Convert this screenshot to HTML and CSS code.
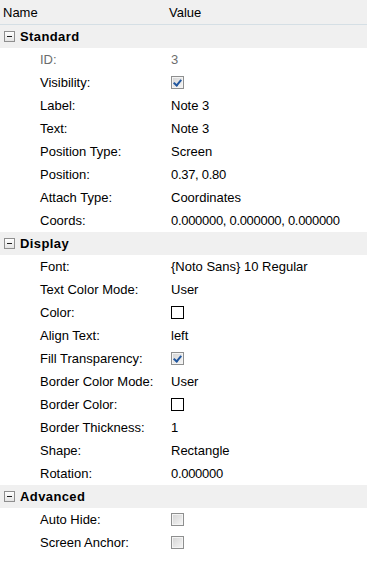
FILE: index.html
```html
<!DOCTYPE html>
<html>
<head>
    <title>Properties</title>
    <link rel="stylesheet" href="styles.css">
</head>
<body>
    <div class="grid">
        <div class="head">
            <div class="name-col">Name</div>
            <div class="value-col">Value</div>
        </div>

        <div class="section"><span class="toggle"></span>Standard</div>
        <div class="row disabled"><div class="label">ID:</div><div class="value">3</div></div>
        <div class="row"><div class="label">Visibility:</div><div class="value"><span class="check on"></span></div></div>
        <div class="row"><div class="label">Label:</div><div class="value">Note 3</div></div>
        <div class="row"><div class="label">Text:</div><div class="value">Note 3</div></div>
        <div class="row"><div class="label">Position Type:</div><div class="value">Screen</div></div>
        <div class="row"><div class="label">Position:</div><div class="value num">0.37, 0.80</div></div>
        <div class="row"><div class="label">Attach Type:</div><div class="value">Coordinates</div></div>
        <div class="row"><div class="label">Coords:</div><div class="value num">0.000000, 0.000000, 0.000000</div></div>

        <div class="section"><span class="toggle"></span>Display</div>
        <div class="row"><div class="label">Font:</div><div class="value">{Noto Sans} 10 Regular</div></div>
        <div class="row"><div class="label">Text Color Mode:</div><div class="value">User</div></div>
        <div class="row"><div class="label">Color:</div><div class="value"><span class="swatch"></span></div></div>
        <div class="row"><div class="label">Align Text:</div><div class="value">left</div></div>
        <div class="row"><div class="label">Fill Transparency:</div><div class="value"><span class="check on"></span></div></div>
        <div class="row"><div class="label">Border Color Mode:</div><div class="value">User</div></div>
        <div class="row"><div class="label">Border Color:</div><div class="value"><span class="swatch"></span></div></div>
        <div class="row"><div class="label">Border Thickness:</div><div class="value">1</div></div>
        <div class="row"><div class="label">Shape:</div><div class="value">Rectangle</div></div>
        <div class="row"><div class="label">Rotation:</div><div class="value num">0.000000</div></div>

        <div class="section"><span class="toggle"></span>Advanced</div>
        <div class="row"><div class="label">Auto Hide:</div><div class="value"><span class="check"></span></div></div>
        <div class="row"><div class="label">Screen Anchor:</div><div class="value"><span class="check"></span></div></div>
    </div>
</body>
</html>
```

FILE: styles.css
```css
body {
    margin: 0;
    background: #fff;
    font-family: "Liberation Sans", Arial, sans-serif;
    font-size: 13px;
    color: #000;
}
.grid {
    width: 367px;
}
.head {
    display: flex;
    height: 24px;
    align-items: center;
    background: #f0f0f0;
    border-bottom: 1px solid #d5dfe5;
}
.name-col {
    width: 166px;
    padding-left: 3px;
}
.section {
    display: flex;
    align-items: center;
    height: 23px;
    background: #f0f0f0;
    font-weight: bold;
    letter-spacing: 0.4px;
    padding-left: 4px;
}
.toggle {
    position: relative;
    width: 9px;
    height: 9px;
    margin-right: 5px;
    border: 1px solid #8f8f8f;
    background: linear-gradient(#ffffff, #e4e4e4);
}
.toggle::after {
    content: "";
    position: absolute;
    left: 2px;
    top: 4px;
    width: 5px;
    height: 1px;
    background: #1e1e1e;
}
.row {
    display: flex;
    align-items: center;
    height: 23px;
}
.label {
    width: 131px;
    padding-left: 40px;
}
.value {
    display: flex;
    align-items: center;
}
.num {
    letter-spacing: -0.3px;
}
.disabled {
    color: #6d6d6d;
}
.check {
    position: relative;
    box-sizing: border-box;
    width: 13px;
    height: 13px;
    border: 1px solid #8e8f8f;
    background: linear-gradient(135deg, #d3d3d3, #f6f6f6);
    box-shadow: inset 0 0 0 1px #f4f4f4;
}
.check.on::after {
    content: "";
    position: absolute;
    left: 3px;
    top: 1px;
    width: 3px;
    height: 6px;
    border-right: 2px solid #21579f;
    border-bottom: 2px solid #21579f;
    transform: rotate(40deg);
}
.swatch {
    box-sizing: border-box;
    width: 13px;
    height: 13px;
    border: 1px solid #000;
    background: #fff;
}
```
